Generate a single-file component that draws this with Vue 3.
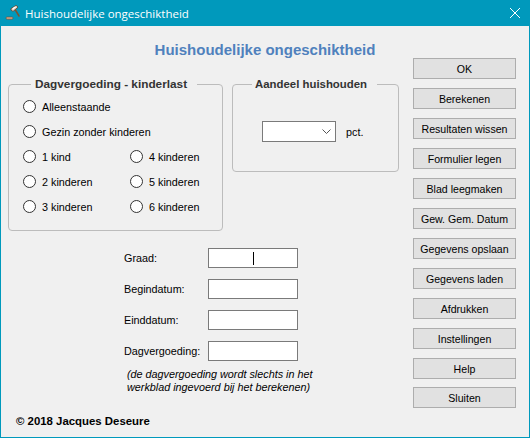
<template>
  <div class="window">
    <header class="titlebar">
      <svg class="app-icon" width="16" height="16" viewBox="0 0 16 16">
        <path d="M9.5 3.5 L14 11" stroke="#7d5230" stroke-width="1.5" stroke-linecap="round" />
        <path d="M6 5 L6 3.6 L11.2 0.4 L13 2.2 L8 6.4 Z" fill="#e4d6c8" stroke="#5b3a22" stroke-width=".8" />
        <path d="M7.8 3.8 L10.6 1.8" stroke="#fff" stroke-width="1.2" />
        <rect x="1" y="12" width="7" height="2.2" rx="1.1" fill="#d8a98a" stroke="#6d4a33" stroke-width=".6" />
      </svg>
      <span class="title-text">{{ title }}</span>
      <svg class="close" width="10" height="10" viewBox="0 0 10 10">
        <path d="M0 0 L10 10 M10 0 L0 10" stroke="#fff" stroke-width="1" fill="none" />
      </svg>
    </header>

    <h1 class="heading">{{ title }}</h1>

    <div class="body">
      <main class="main">
        <div class="groups">
          <fieldset class="group group-left">
            <legend>Dagvergoeding - kinderlast</legend>
            <div class="radios">
              <label v-for="opt in options" :key="opt.label" class="radio" :class="{ wide: opt.wide }">
                <input type="radio" name="kinderlast" />
                <span>{{ opt.label }}</span>
              </label>
            </div>
          </fieldset>

          <fieldset class="group group-right">
            <legend>Aandeel huishouden</legend>
            <div class="share">
              <div class="select">
                <svg width="9" height="5" viewBox="0 0 9 5">
                  <path d="M0.5 0.5 L4.5 4.5 L8.5 0.5" stroke="#555" stroke-width="1" fill="none" />
                </svg>
              </div>
              <span>pct.</span>
            </div>
          </fieldset>
        </div>

        <div class="fields">
          <template v-for="(f, i) in fields" :key="f">
            <label class="field-label">{{ f }}</label>
            <div class="field-input"><span v-if="i === 0" class="caret"></span></div>
          </template>
        </div>

        <p class="note">(de dagvergoeding wordt slechts in het<br>werkblad ingevoerd bij het berekenen)</p>
        <p class="copyright">© 2018 Jacques Deseure</p>
      </main>

      <aside class="buttons">
        <button v-for="b in buttons" :key="b" type="button">{{ b }}</button>
      </aside>
    </div>
  </div>
</template>

<script setup>
const title = 'Huishoudelijke ongeschiktheid'

const options = [
  { label: 'Alleenstaande', wide: true },
  { label: 'Gezin zonder kinderen', wide: true },
  { label: '1 kind' },
  { label: '4 kinderen' },
  { label: '2 kinderen' },
  { label: '5 kinderen' },
  { label: '3 kinderen' },
  { label: '6 kinderen' },
]

const fields = ['Graad:', 'Begindatum:', 'Einddatum:', 'Dagvergoeding:']

const buttons = [
  'OK',
  'Berekenen',
  'Resultaten wissen',
  'Formulier legen',
  'Blad leegmaken',
  'Gew. Gem. Datum',
  'Gegevens opslaan',
  'Gegevens laden',
  'Afdrukken',
  'Instellingen',
  'Help',
  'Sluiten',
]
</script>

<style>
html, body {
  margin: 0;
  overflow: hidden;
}
</style>

<style scoped>
.window {
  box-sizing: border-box;
  width: 530px;
  height: 438px;
  display: flex;
  flex-direction: column;
  background: #f0f0f0;
  border: 1px solid #0099bc;
  border-top: none;
  font-family: "Liberation Sans", Arial, sans-serif;
  font-size: 10.8px;
  color: #000;
}

.titlebar {
  height: 26px;
  flex: none;
  display: flex;
  align-items: center;
  background: #0099bc;
  color: #fff;
  font-family: "Open Sans", "Noto Sans", sans-serif;
  font-size: 11.5px;
  padding: 0 9px 0 4px;
}

.app-icon {
  margin-right: 4px;
}

.title-text {
  flex: 1;
}

.heading {
  box-sizing: border-box;
  flex: none;
  height: 32px;
  margin: 0;
  padding-top: 15px;
  line-height: 18px;
  font-size: 15px;
  font-weight: bold;
  color: #4f81bd;
  text-align: center;
}

.body {
  flex: 1;
  display: flex;
  min-height: 0;
}

.main {
  width: 412px;
  flex: none;
  padding-left: 7px;
  box-sizing: border-box;
}

.groups {
  display: flex;
  gap: 9px;
  align-items: flex-start;
  margin-top: 19px;
}

.group {
  margin: 0;
  box-sizing: border-box;
  border: 1px solid #bcbcbc;
  border-radius: 4px;
  padding: 0;
  min-width: 0;
}

.group legend {
  font-size: 11.8px;
  font-weight: bold;
  color: #333;
  line-height: 14px;
  padding: 0 10px 0 4px;
  margin-left: 22px;
}

.group-left {
  width: 215px;
  height: 154px;
}

.group-right {
  width: 167px;
  height: 95px;
}

.group-right legend {
  font-size: 11.4px;
  padding-left: 3px;
  margin-left: 19px;
}

.radios {
  display: grid;
  grid-template-columns: 107px 1fr;
  grid-auto-rows: 25px;
  padding: 3px 0 0 14px;
}

.radio {
  display: flex;
  align-items: center;
  gap: 6px;
}

.radio.wide {
  grid-column: span 2;
}

.radio input {
  appearance: none;
  box-sizing: border-box;
  width: 13px;
  height: 13px;
  margin: 0;
  background: #fff;
  border: 1px solid #333;
  border-radius: 50%;
}

.share {
  display: flex;
  align-items: center;
  gap: 10px;
  padding: 30px 0 0 29px;
}

.select {
  box-sizing: border-box;
  width: 74px;
  height: 21px;
  background: #fff;
  border: 1px solid #7a7a7a;
  display: flex;
  align-items: center;
  justify-content: flex-end;
  padding-right: 4px;
}

.fields {
  display: grid;
  grid-template-columns: 84px 90px;
  grid-auto-rows: 20px;
  row-gap: 11px;
  align-items: center;
  margin: 17px 0 0 116px;
}

.field-label {
  white-space: nowrap;
}

.field-input {
  box-sizing: border-box;
  height: 20px;
  background: #fff;
  border: 1px solid #7a7a7a;
  display: flex;
  align-items: center;
  justify-content: center;
}

.caret {
  width: 1px;
  height: 13px;
  background: #000;
}

.note {
  margin: 7px 0 0 119px;
  font-size: 10.8px;
  font-style: italic;
  line-height: 13px;
}

.copyright {
  margin: 20px 0 0 8px;
  font-size: 11.4px;
  font-weight: bold;
  line-height: 14px;
}

.buttons {
  display: flex;
  flex-direction: column;
  gap: 9px;
}

.buttons button {
  box-sizing: border-box;
  width: 103px;
  height: 21px;
  padding: 0;
  background: #e1e1e1;
  border: 1px solid #adadad;
  font: inherit;
  font-size: 10.6px;
  color: #000;
}

.buttons button:last-child {
  margin-top: -1px;
}
</style>
